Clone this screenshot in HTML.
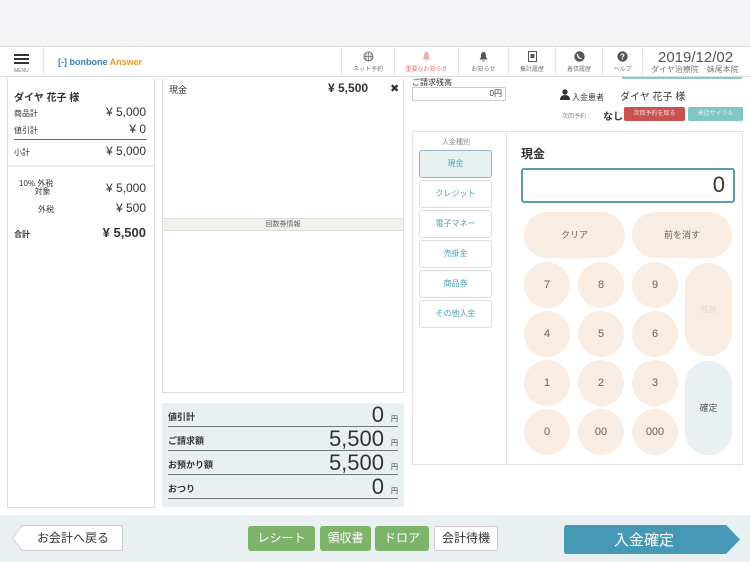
<!DOCTYPE html><html><head><meta charset="utf-8"><style>
*{box-sizing:border-box;margin:0;padding:0}
body{width:750px;height:562px;position:relative;background:#fff;font-family:"Liberation Sans","Noto Sans CJK JP",sans-serif;color:#333;overflow:hidden}
.a{position:absolute}
.nav{top:47px;height:30px;border-left:1px solid #e4e4e4;text-align:center;font-size:6px;color:#777}
.nav svg{display:block;margin:4px auto 2px}
.pt{position:absolute;left:419px;width:73px;height:28px;border:1px solid #ddd;border-radius:3px;font-size:8px;color:#4a9fb5;text-align:center;line-height:26px;background:#fff}
.k{position:absolute;width:46px;height:46px;border-radius:23px;background:#f9ece3;text-align:center;line-height:46px;font-size:11px;color:#665}
.gb{position:absolute;top:526px;height:25px;background:#7db36a;color:#fff;font-size:12px;text-align:center;line-height:25px;border-radius:3px}
.row{position:absolute;left:168px;width:230px;border-bottom:1px solid #777;height:22px}
.row span{position:absolute;left:0;bottom:3px;font-size:9px;font-weight:bold}
.row b{position:absolute;right:14px;bottom:-2px;font-size:22px;font-weight:normal}
.row em{position:absolute;right:0;bottom:2px;font-size:7px;font-style:normal}
</style></head><body>
<div class="a" style="left:0;top:0;width:750px;height:47px;background:#f3f2f4;border-bottom:1px solid #ddd"></div>
<div class="a" style="left:0;top:47px;width:750px;height:30px;border-bottom:1px solid #ddd"></div>
<div class="a" style="left:14px;top:54px;width:15px;height:2px;background:#333;box-shadow:0 4px #333,0 8px #333"></div>
<div class="a" style="left:14px;top:68px;font-size:5px;color:#777">MENU</div>
<div class="a" style="left:43px;top:47px;width:1px;height:30px;background:#e4e4e4"></div>
<div class="a" style="left:58px;top:57px;font-size:9px;font-weight:bold;color:#3a7cc0">[-] bonbone <span style="color:#e89a2c">Answer</span></div>
<div class="a nav" style="left:341px;width:53px"><svg width="11" height="11"><circle cx="5.5" cy="5.5" r="4.5" fill="none" stroke="#666"/><path d="M1 5.5H10M5.5 1V10M3 2.5V8.5M8 2.5V8.5" stroke="#666" stroke-width=".7"/></svg>ネット予約</div>
<div class="a nav" style="left:394px;width:64px;color:#d77"><svg width="11" height="11"><path d="M5.5 1C3 1 3 4 3 6L1.5 8.5H9.5L8 6C8 4 8 1 5.5 1ZM4.5 9.5H6.5V10.5H4.5Z" fill="#eab0b0"/></svg>重要なお知らせ</div>
<div class="a nav" style="left:458px;width:50px"><svg width="11" height="11"><path d="M5.5 1C3 1 3 4 3 6L1.5 8.5H9.5L8 6C8 4 8 1 5.5 1ZM4.5 9.5H6.5V10.5H4.5Z" fill="#555"/></svg>お知らせ</div>
<div class="a nav" style="left:508px;width:47px"><svg width="11" height="11"><rect x="1.5" y=".5" width="8" height="10" fill="none" stroke="#555"/><rect x="3.5" y="3" width="4" height="4" fill="#555"/></svg>集計履歴</div>
<div class="a nav" style="left:555px;width:47px"><svg width="11" height="11"><circle cx="5.5" cy="5.5" r="5.2" fill="#555"/><path d="M3.5 3C3.5 6 5 7.5 7.5 7.5" stroke="#fff" stroke-width="1.3" fill="none"/></svg>着信履歴</div>
<div class="a nav" style="left:602px;width:40px"><svg width="11" height="11"><circle cx="5.5" cy="5.5" r="5.2" fill="#555"/><text x="5.5" y="8.5" font-size="8" font-weight="bold" fill="#fff" text-anchor="middle" font-family="Liberation Sans">?</text></svg>ヘルプ</div>
<div class="a nav" style="left:642px;width:108px"></div>
<div class="a" style="left:658px;top:49px;font-size:15px;color:#555">2019/12/02</div>
<div class="a" style="left:651px;top:64px;font-size:8px;color:#777">ダイヤ治療院　妹尾本院</div>
<div class="a" style="left:7px;top:78px;width:148px;height:430px;border:1px solid #ddd;border-top:none"></div>
<div class="a" style="left:14px;top:89px;font-size:10px;font-weight:bold">ダイヤ 花子 様</div>
<div class="a" style="left:14px;top:108px;font-size:8px">商品計</div><div class="a" style="right:604px;top:105px;font-size:12px">¥ 5,000</div>
<div class="a" style="left:14px;top:125px;font-size:8px">値引計</div><div class="a" style="right:604px;top:122px;font-size:12px">¥ 0</div>
<div class="a" style="left:14px;top:139px;width:133px;height:1px;background:#666"></div>
<div class="a" style="left:14px;top:147px;font-size:8px">小計</div><div class="a" style="right:604px;top:144px;font-size:12px">¥ 5,000</div>
<div class="a" style="left:8px;top:165px;width:146px;height:2px;background:#eee"></div>
<div class="a" style="left:19px;top:180px;font-size:8px;line-height:8px">10% 外税<br>&nbsp;&nbsp;&nbsp;&nbsp;&nbsp;&nbsp;&nbsp;対象</div><div class="a" style="right:604px;top:181px;font-size:12px">¥ 5,000</div>
<div class="a" style="left:38px;top:204px;font-size:8px">外税</div><div class="a" style="right:604px;top:201px;font-size:12px">¥ 500</div>
<div class="a" style="left:14px;top:229px;font-size:8px;font-weight:bold">合計</div><div class="a" style="right:604px;top:225px;font-size:13px;font-weight:bold">¥ 5,500</div>
<div class="a" style="left:162px;top:78px;width:242px;height:315px;border:1px solid #ddd;border-top:none"></div>
<div class="a" style="left:169px;top:83px;font-size:9px">現金</div>
<div class="a" style="left:328px;top:81px;font-size:12px;font-weight:bold">¥ 5,500</div>
<div class="a" style="left:390px;top:82px;font-size:11px">✖</div>
<div class="a" style="left:163px;top:218px;width:240px;height:13px;background:#f2f0ea;border-top:1px solid #ddd;border-bottom:1px solid #ddd;font-size:7px;text-align:center;line-height:11px;color:#666">回数券情報</div>
<div class="a" style="left:162px;top:403px;width:242px;height:104px;background:#e9f0f2"></div>
<div class="row" style="top:405px"><span>値引計</span><b>0</b><em>円</em></div>
<div class="row" style="top:429px"><span>ご請求額</span><b>5,500</b><em>円</em></div>
<div class="row" style="top:453px"><span>お預かり額</span><b>5,500</b><em>円</em></div>
<div class="row" style="top:477px"><span>おつり</span><b>0</b><em>円</em></div>
<div class="a" style="left:412px;top:77px;font-size:8px">ご請求残高</div>
<div class="a" style="left:412px;top:87px;width:94px;height:14px;border:1px solid #ccc;font-size:8px;text-align:right;padding-right:3px;line-height:12px">0円</div>
<div class="a" style="left:622px;top:77px;width:120px;height:2px;background:#8cc8d0"></div>
<svg class="a" style="left:560px;top:89px" width="10" height="11"><circle cx="5" cy="3" r="2.7" fill="#333"/><path d="M0 11Q0 6 5 6Q10 6 10 11Z" fill="#333"/></svg>
<div class="a" style="left:572px;top:88px;font-size:8px">入金患者　　<span style="font-size:10px">ダイヤ 花子 様</span></div>
<div class="a" style="left:562px;top:111px;font-size:6px;color:#888">次回予約：</div>
<div class="a" style="left:603px;top:108px;font-size:10px;font-weight:bold">なし</div>
<div class="a" style="left:624px;top:107px;width:61px;height:14px;background:#c9524e;color:#fbdcdc;font-size:6px;text-align:center;line-height:14px;border-radius:2px">次回予約を取る</div>
<div class="a" style="left:688px;top:107px;width:55px;height:14px;background:#7fc7c4;color:#e6f6f5;font-size:6px;text-align:center;line-height:14px;border-radius:2px">来店サイクル</div>
<div class="a" style="left:412px;top:131px;width:331px;height:334px;border:1px solid #e2e2e2"></div>
<div class="a" style="left:506px;top:131px;width:1px;height:334px;background:#e2e2e2"></div>
<div class="a" style="left:442px;top:137px;font-size:7px;color:#888">入金種別</div>
<div class="pt" style="top:150px;background:#e8f0f2;border-color:#8fbac6">現金</div>
<div class="pt" style="top:180px">クレジット</div>
<div class="pt" style="top:210px">電子マネー</div>
<div class="pt" style="top:240px">売掛金</div>
<div class="pt" style="top:270px">商品券</div>
<div class="pt" style="top:300px">その他入金</div>
<div class="a" style="left:521px;top:145px;font-size:12px;font-weight:bold">現金</div>
<div class="a" style="left:521px;top:168px;width:214px;height:35px;border:2px solid #5a9eb0;border-radius:3px;text-align:right;font-size:22px;padding-right:8px;line-height:30px">0</div>
<div class="a" style="left:524px;top:212px;width:101px;height:46px;border-radius:23px;background:#f9ece3;text-align:center;line-height:46px;font-size:9px;color:#665">クリア</div>
<div class="a" style="left:632px;top:212px;width:100px;height:46px;border-radius:23px;background:#f9ece3;text-align:center;line-height:46px;font-size:9px;color:#665">前を消す</div>
<div class="k" style="left:524px;top:262px">7</div><div class="k" style="left:578px;top:262px">8</div><div class="k" style="left:632px;top:262px">9</div>
<div class="k" style="left:524px;top:311px">4</div><div class="k" style="left:578px;top:311px">5</div><div class="k" style="left:632px;top:311px">6</div>
<div class="k" style="left:524px;top:360px">1</div><div class="k" style="left:578px;top:360px">2</div><div class="k" style="left:632px;top:360px">3</div>
<div class="k" style="left:524px;top:409px">0</div><div class="k" style="left:578px;top:409px">00</div><div class="k" style="left:632px;top:409px">000</div>
<div class="a" style="left:685px;top:263px;width:47px;height:93px;border-radius:23px;background:#f9ece3;text-align:center;line-height:93px;font-size:8px;color:#ddd">残額</div>
<div class="a" style="left:685px;top:361px;width:47px;height:94px;border-radius:23px;background:#e9f0f2;text-align:center;line-height:94px;font-size:9px;color:#555">確定</div>
<div class="a" style="left:0;top:515px;width:750px;height:47px;background:#e9f0f2"></div>
<svg class="a" style="left:12px;top:525px" width="112" height="26"><path d="M10 0.5H110.5V25.5H10L0.5 13Z" fill="#fff" stroke="#ccc"/><text x="25" y="17" font-size="12" fill="#333" font-family="Liberation Sans,Noto Sans CJK JP,sans-serif">お会計へ戻る</text></svg>
<div class="gb" style="left:248px;width:67px">レシート</div>
<div class="gb" style="left:320px;width:51px">領収書</div>
<div class="gb" style="left:375px;width:54px">ドロア</div>
<div class="a" style="left:434px;top:526px;width:64px;height:25px;background:#fff;border:1px solid #ccc;border-radius:3px;font-size:12px;text-align:center;line-height:23px">会計待機</div>
<svg class="a" style="left:564px;top:525px" width="176" height="29"><path d="M3 0H162L176 14.5L162 29H3Q0 29 0 26V3Q0 0 3 0Z" fill="#4599b5"/><text x="50" y="20" font-size="15" fill="#fff" font-family="Liberation Sans,Noto Sans CJK JP,sans-serif">入金確定</text></svg>
</body></html>
